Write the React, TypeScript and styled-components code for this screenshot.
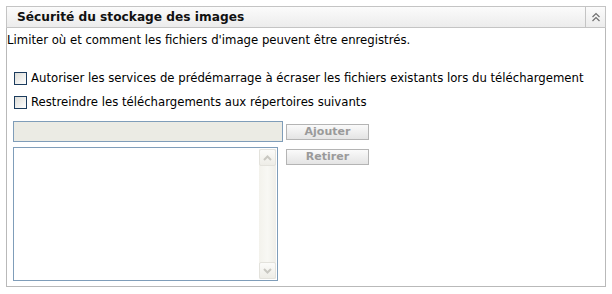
import styled, { createGlobalStyle } from "styled-components";

const GlobalStyle = createGlobalStyle`
  body {
    margin: 0;
    background: #ffffff;
    font-family: "DejaVu Sans", Verdana, sans-serif;
    font-size: 11.7px;
    color: #000000;
  }
`;

const Page = styled.div`
  padding: 6px 0 0 6px;
`;

const Panel = styled.section`
  width: 600px;
`;

const PanelHeader = styled.div`
  display: flex;
  align-items: stretch;
  height: 20px;
  border: 1px solid #c4c4c4;
  background: linear-gradient(to bottom, #fbfbfb 0%, #ececec 100%);
`;

const PanelTitle = styled.h2`
  flex: 1;
  margin: 0;
  padding-left: 10px;
  font-size: 12.2px;
  font-weight: 700;
  line-height: 20px;
  color: #111111;
`;

const CollapseButton = styled.div`
  display: flex;
  align-items: center;
  justify-content: center;
  width: 19px;
  border-left: 1px solid #c4c4c4;
`;

const PanelBody = styled.div`
  padding: 4px 6px 5px 0;
  border: 1px solid #b9b9b9;
  border-top: none;
`;

const Description = styled.p`
  margin: 0;
  line-height: 16px;
`;

const Options = styled.div`
  display: flex;
  flex-direction: column;
  margin-top: 18px;
  padding-left: 7px;
`;

const OptionRow = styled.label`
  display: flex;
  align-items: center;
  gap: 4px;
  height: 24px;
`;

const CheckBox = styled.span`
  box-sizing: border-box;
  width: 13px;
  height: 13px;
  border: 1px solid #1c3c5e;
  background: linear-gradient(135deg, #dcdcd7 0%, #ffffff 100%);
`;

const ListEditor = styled.div`
  display: grid;
  grid-template-columns: 270px auto;
  grid-template-rows: 21px 134px;
  column-gap: 3px;
  row-gap: 5px;
  margin-top: 7px;
  padding-left: 6px;
`;

const PathInput = styled.div`
  box-sizing: border-box;
  border: 1px solid #7f9db9;
  background: #ebebe4;
`;

const ActionButton = styled.button<{ $top: number }>`
  box-sizing: border-box;
  align-self: start;
  margin-top: ${(p) => p.$top}px;
  width: 83px;
  height: 16px;
  padding: 0;
  border: 1px solid #b4b4b4;
  background: linear-gradient(to bottom, #fafafa 0%, #e4e4e4 100%);
  color: #9a9a9a;
  font-family: "DejaVu Sans", Verdana, sans-serif;
  font-size: 11px;
  font-weight: 700;
  line-height: 14px;
`;

const ListBox = styled.div`
  box-sizing: border-box;
  width: 265px;
  display: flex;
  justify-content: flex-end;
  padding: 1px;
  border: 1px solid #7f9db9;
  background: #ffffff;
`;

const ScrollBar = styled.div`
  display: flex;
  flex-direction: column;
  justify-content: space-between;
  width: 17px;
  background: linear-gradient(to right, #f3f2ec 0%, #f8f8f4 50%, #efeee8 100%);
`;

const ScrollArrow = styled.div`
  box-sizing: border-box;
  display: flex;
  align-items: center;
  justify-content: center;
  height: 17px;
  border: 1px solid #e3e2dc;
  border-radius: 2px;
  background: linear-gradient(to bottom, #fbfbf9 0%, #eeede7 100%);
`;

const Arrow = ({ up }: { up: boolean }) => (
  <svg width="9" height="6" viewBox="0 0 9 6">
    <path
      d={up ? "M1 5 L4.5 1.5 L8 5" : "M1 1 L4.5 4.5 L8 1"}
      fill="none"
      stroke="#c9c8c2"
      strokeWidth="2"
    />
  </svg>
);

const DoubleChevron = () => (
  <svg width="10" height="10" viewBox="0 0 10 10">
    <path d="M1.5 5 L5 1.5 L8.5 5 M1.5 9 L5 5.5 L8.5 9" fill="none" stroke="#6f6f6f" strokeWidth="1.2" />
  </svg>
);

export default function App() {
  return (
    <>
      <GlobalStyle />
      <Page>
        <Panel>
          <PanelHeader>
            <PanelTitle>Sécurité du stockage des images</PanelTitle>
            <CollapseButton>
              <DoubleChevron />
            </CollapseButton>
          </PanelHeader>
          <PanelBody>
            <Description>Limiter où et comment les fichiers d'image peuvent être enregistrés.</Description>
            <Options>
              <OptionRow>
                <CheckBox />
                Autoriser les services de prédémarrage à écraser les fichiers existants lors du téléchargement
              </OptionRow>
              <OptionRow>
                <CheckBox />
                Restreindre les téléchargements aux répertoires suivants
              </OptionRow>
            </Options>
            <ListEditor>
              <PathInput />
              <ActionButton $top={3}>Ajouter</ActionButton>
              <ListBox>
                <ScrollBar>
                  <ScrollArrow>
                    <Arrow up />
                  </ScrollArrow>
                  <ScrollArrow>
                    <Arrow up={false} />
                  </ScrollArrow>
                </ScrollBar>
              </ListBox>
              <ActionButton $top={2}>Retirer</ActionButton>
            </ListEditor>
          </PanelBody>
        </Panel>
      </Page>
    </>
  );
}
